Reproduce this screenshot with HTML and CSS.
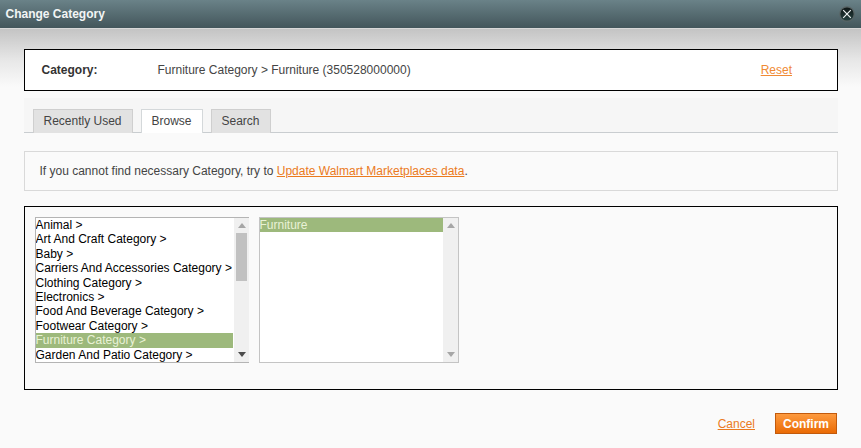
FILE: index.html
```html
<!DOCTYPE html>
<html lang="en">
<head>
<meta charset="utf-8">
<title>Change Category</title>
<link rel="stylesheet" href="styles.css">
</head>
<body>
<header class="titlebar">
  <h1 class="title">Change Category</h1>
  <button class="close" aria-label="Close">
    <svg viewBox="0 0 16 16" width="16" height="16"><defs><linearGradient id="cg" x1="0" y1="0" x2="0" y2="1"><stop offset="0" stop-color="#0f1616"/><stop offset="1" stop-color="#25403f"/></linearGradient></defs><circle cx="8" cy="8" r="7.8" fill="#596465"/><circle cx="8" cy="8" r="6.6" fill="url(#cg)"/><path d="M4.2 4.2 11.8 11.8M11.8 4.2 4.2 11.8" stroke="#eef2f2" stroke-width="1.2" fill="none"/></svg>
  </button>
</header>
<main class="content">
  <section class="category">
    <strong class="category-label">Category:</strong>
    <span class="category-value">Furniture Category &gt; Furniture (350528000000)</span>
    <a class="link reset" href="#">Reset</a>
  </section>
  <nav class="tabs">
    <a class="tab" href="#">Recently Used</a>
    <a class="tab active" href="#">Browse</a>
    <a class="tab" href="#">Search</a>
  </nav>
  <p class="notice">If you cannot find necessary Category, try to <a class="link" href="#">Update Walmart Marketplaces data</a>.</p>
  <section class="browser">
    <div class="listbox left">
      <ul class="options">
        <li>Animal &gt;</li>
        <li>Art And Craft Category &gt;</li>
        <li>Baby &gt;</li>
        <li>Carriers And Accessories Category &gt;</li>
        <li>Clothing Category &gt;</li>
        <li>Electronics &gt;</li>
        <li>Food And Beverage Category &gt;</li>
        <li>Footwear Category &gt;</li>
        <li class="selected">Furniture Category &gt;</li>
        <li>Garden And Patio Category &gt;</li>
      </ul>
      <div class="scrollbar">
        <span class="arrow up"></span>
        <span class="track"><span class="thumb"></span></span>
        <span class="arrow down dark"></span>
      </div>
    </div>
    <div class="listbox right">
      <ul class="options">
        <li class="selected">Furniture</li>
      </ul>
      <div class="scrollbar">
        <span class="arrow up"></span>
        <span class="track"></span>
        <span class="arrow down"></span>
      </div>
    </div>
  </section>
  <footer class="actions">
    <a class="link" href="#">Cancel</a>
    <button class="confirm">Confirm</button>
  </footer>
</main>
</body>
</html>
```
FILE: styles.css
```css
* { box-sizing: border-box; }
html, body { margin: 0; padding: 0; }
body {
  width: 861px;
  height: 448px;
  overflow: hidden;
  font-family: "Liberation Sans", Arial, sans-serif;
  font-size: 12px;
  color: #444;
  background: #fafafa;
}
.titlebar {
  height: 29px;
  padding: 0 6px 1px 5.5px;
  display: flex;
  align-items: center;
  justify-content: space-between;
  background: linear-gradient(#6a8288, #43565b);
  border-bottom: 1px solid #d8d8d8;
}
.title {
  margin: 0;
  font-size: 12px;
  font-weight: bold;
  color: #f2f5f5;
}
.close {
  width: 16px;
  height: 16px;
  padding: 0;
  border: 0;
  background: none;
  display: block;
}
.close svg { display: block; }
.content {
  height: 419px;
  padding: 20px 23px 0 24px;
  background: linear-gradient(#c4c4c4 0, #e8e8e8 32px, #fafafa 58px);
}
.category {
  height: 42px;
  display: flex;
  align-items: center;
  padding: 0 45px 0 16.5px;
  border: 1px solid #000;
  background: #fff;
}
.category-label { width: 116px; color: #333; }
.category-value { flex: 1; }
.link { color: #eb7a1e; text-decoration: underline; }
.reset { color: #f08a34; }
.tabs {
  margin-top: 7px;
  height: 35px;
  padding: 11px 0 0 9px;
  display: flex;
  gap: 8px;
  background: #f6f6f6;
  border-bottom: 1px solid #c9cdd0;
}
.tab {
  height: 24px;
  padding: 0 9.5px 2px;
  display: flex;
  align-items: center;
  color: #444;
  text-decoration: none;
  background: #e2e2e2;
  border: 1px solid #cfcfcf;
  border-bottom: 0;
}
.tab + .tab { margin-left: 0; }
.tab { min-width: 0; }
.tab:first-child { width: 100px; }
.tab.active { width: 62px; background: #fff; border-color: #d4d8da; }
.tab:last-child { width: 60px; }
.notice {
  margin: 18px 0 0;
  height: 40px;
  padding: 0 14.5px;
  display: flex;
  align-items: center;
  white-space: pre-wrap;
  background: #fafafa;
  border: 1px solid #d9d9d9;
}
.browser {
  margin-top: 15px;
  height: 184px;
  padding: 10px;
  display: flex;
  gap: 10px;
  border: 1px solid #000;
  background: #fafafa;
}
.listbox {
  height: 146px;
  display: flex;
  overflow: hidden;
  background: #fff;
  border: 1px solid #b4b4b4;
  border-right: 0;
  color: #000;
}
.left { width: 214px; }
.left .options { margin-right: 1px; }
.right { width: 200px; border-right: 1px solid #c4c4c4; border-color: #c4c4c4; }
.options {
  flex: 1;
  min-width: 0;
  margin: 0;
  padding: 0;
  list-style: none;
  white-space: nowrap;
}
.options li {
  height: 14.4px;
  line-height: 14px;
  text-indent: -0.5px;
}
.selected { background: #9db97c; color: #e9f2d6; }
.scrollbar {
  width: 15px;
  flex: none;
  display: flex;
  flex-direction: column;
  align-items: center;
  background: #f0f0f0;
}
.arrow {
  flex: none;
  width: 0;
  height: 0;
  margin: 5px 0;
  border-left: 4px solid transparent;
  border-right: 4px solid transparent;
}
.up { border-bottom: 5px solid #a6a6a6; }
.down { border-top: 5px solid #a6a6a6; }
.dark { border-top-color: #4c4c4c; }
.track { flex: 1; width: 100%; display: block; }
.thumb {
  display: block;
  width: 11px;
  height: 48px;
  margin: 0 auto 0 2px;
  background: #c1c1c1;
}
.actions {
  margin-top: 23px;
  padding-right: 1px;
  display: flex;
  align-items: center;
  justify-content: flex-end;
  gap: 20px;
}
.confirm {
  width: 62px;
  height: 21px;
  padding: 0;
  font-family: inherit;
  font-size: 12px;
  font-weight: bold;
  color: #fff;
  background: linear-gradient(#fd9a3e, #ea6a05);
  border: 1px solid #c25a0c;
}
```
